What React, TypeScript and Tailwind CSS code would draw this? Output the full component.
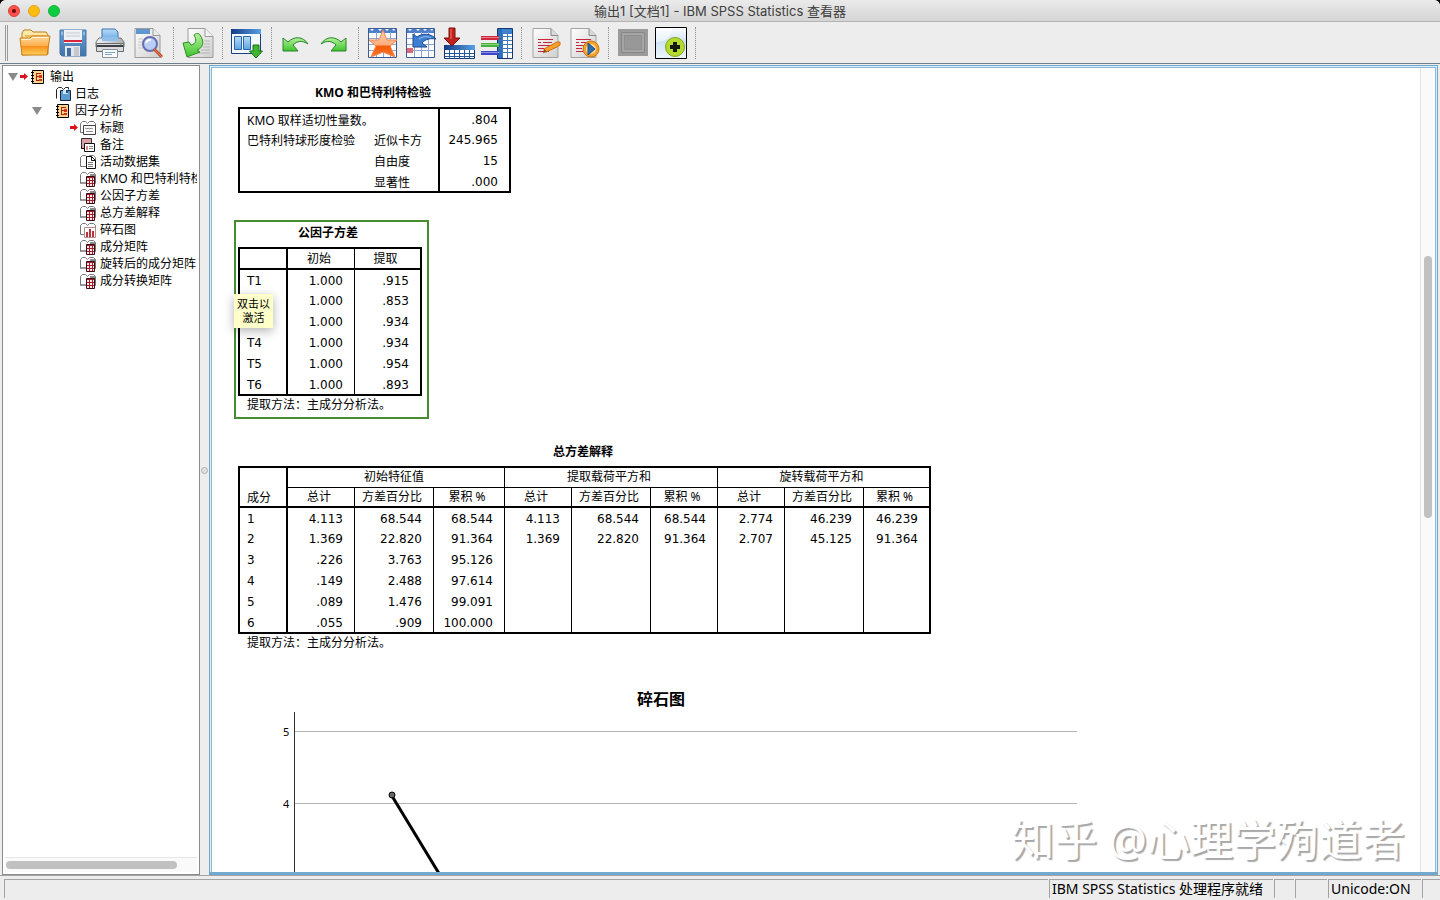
import type { ReactNode } from "react";

/* ---------- toolbar icons ---------- */

const Svg = ({ children }: { children: ReactNode }) => (
  <svg width="32" height="32" viewBox="0 0 32 32" fill="none" aria-hidden="true">
    {children}
  </svg>
);

const Gradients = () => (
  <svg width="0" height="0" className="absolute" aria-hidden="true">
    <defs>
      <linearGradient id="orange" x1="0" y1="0" x2="0" y2="1">
        <stop offset="0" stopColor="#fdd9a0" />
        <stop offset="0.5" stopColor="#fdb04e" />
        <stop offset="0.55" stopColor="#f9921c" />
        <stop offset="1" stopColor="#ffcf5c" />
      </linearGradient>
      <linearGradient id="folderBack" x1="0" y1="0" x2="0" y2="1">
        <stop offset="0" stopColor="#fff0b8" />
        <stop offset="1" stopColor="#f6b840" />
      </linearGradient>
      <linearGradient id="steel" x1="0" y1="0" x2="0" y2="1">
        <stop offset="0" stopColor="#6ea0d0" />
        <stop offset="1" stopColor="#3f74ab" />
      </linearGradient>
      <linearGradient id="silver" x1="0" y1="0" x2="1" y2="0">
        <stop offset="0" stopColor="#f4f4f4" />
        <stop offset="1" stopColor="#a9adb3" />
      </linearGradient>
      <linearGradient id="sheet" x1="0" y1="0" x2="1" y2="1">
        <stop offset="0" stopColor="#ffffff" />
        <stop offset="1" stopColor="#cfcfcf" />
      </linearGradient>
      <linearGradient id="sky" x1="0" y1="0" x2="0" y2="1">
        <stop offset="0" stopColor="#b9dcf7" />
        <stop offset="1" stopColor="#5ea3e0" />
      </linearGradient>
      <linearGradient id="green" x1="0" y1="0" x2="0" y2="1">
        <stop offset="0" stopColor="#b4f29a" />
        <stop offset="1" stopColor="#3fc42c" />
      </linearGradient>
      <linearGradient id="navy" x1="0" y1="0" x2="1" y2="0">
        <stop offset="0" stopColor="#123a86" />
        <stop offset="1" stopColor="#5aa0e4" />
      </linearGradient>
      <linearGradient id="star" x1="0" y1="0" x2="0" y2="1">
        <stop offset="0" stopColor="#ffd3b4" />
        <stop offset="0.55" stopColor="#fdac7c" />
        <stop offset="0.6" stopColor="#f45c08" />
        <stop offset="1" stopColor="#f9742a" />
      </linearGradient>
      <linearGradient id="panel" x1="0" y1="0" x2="0" y2="1">
        <stop offset="0" stopColor="#ffffff" />
        <stop offset="0.45" stopColor="#cfe3f3" />
        <stop offset="1" stopColor="#eef6fb" />
      </linearGradient>
    </defs>
  </svg>
);

const OpenIcon = () => (
  <Svg>
    <path d="M3 28V6l2-3h7l2 2h13l2 3v19z" fill="url(#folderBack)" stroke="#b97d18" />
    <path d="M6 9h20" stroke="#d8952b" />
    <path d="M1 11h10l2-2h18l-3 19H3z" fill="url(#orange)" stroke="#c8801a" />
    <path d="M2.500 12.500h9l2-2h16" stroke="#fff3d2" />
  </Svg>
);

const SaveIcon = () => (
  <Svg>
    <path d="M3 3h26v26H5l-2-2z" fill="url(#steel)" stroke="#4474a6" />
    <path d="M7 3h18v13H7z" fill="#eef2f6" />
    <path d="M9 6h14M9 9h14" stroke="#c5cbd2" />
    <path d="M7 13h18v2H7z" fill="#d9263e" />
    <path d="M8 19h15v10H8z" fill="#e3e6ea" />
    <path d="M10 21h4v8h-4z" fill="#3f6fa3" />
    <path d="M17 20h5v9h-5z" fill="#c4c9cf" />
    <path d="M5 5v3M27 5v3" stroke="#bcd4ec" />
  </Svg>
);

const PrintIcon = () => (
  <Svg>
    <path d="M7 2h13l3 3v9H7z" fill="url(#sky)" stroke="#3b75ad" />
    <path d="M4 11h22l3 4v5H1v-5z" fill="url(#silver)" stroke="#6f7277" />
    <path d="M7 10h16v4H7z" fill="#8dbfe9" />
    <path d="M1.500 16.500h27v8h-27z" fill="#d8dadd" stroke="#686b70" />
    <path d="M2 19h26" stroke="#3e4044" strokeWidth="2" />
    <path d="M7.500 22.500h15v8h-15z" fill="#f8fbfe" stroke="#8c9299" />
    <path d="M10 25.500h10M10 27.500h7" stroke="#7fa8cf" />
    <path d="M25 17h2" stroke="#3cae3c" />
  </Svg>
);

const PreviewIcon = () => (
  <Svg>
    <path d="M2 1.500h18l7 7v22H2z" fill="url(#sheet)" stroke="#9b9b9b" />
    <path d="M3 2h14v5H3z" fill="#6096cb" />
    <path d="M20 1.500v7h7" fill="#ececec" stroke="#9b9b9b" />
    <path d="M5 12h5M5 15h4M5 18h4M5 21h5" stroke="#c9c9c9" />
    <circle cx="17" cy="17" r="7" fill="#b9cdf5" stroke="#656fae" strokeWidth="2" />
    <path d="M13 16a4 4 0 0 1 5-3" stroke="#fff" strokeWidth="2" />
    <path d="M21 22l8 8" stroke="#b8442a" strokeWidth="3" />
    <path d="M21 22l8 8" stroke="#f08c5c" />
  </Svg>
);

const ExportIcon = () => (
  <Svg>
    <path d="M6 1.500h17l8 8v21H6z" fill="url(#sheet)" stroke="#9b9b9b" />
    <path d="M23 1.500v8h8" fill="#f2f2f2" stroke="#9b9b9b" />
    <path d="M22 14h6M22 17h6M21 20h7M19 23h9M13 26h15" stroke="#b5b5b5" />
    <path
      d="M1 16l6-1 2 3c5-1 6-5 3-10 2-2 5-2 6 0 5 7 3 13-3 15l3 2-13 5z"
      fill="url(#green)"
      stroke="#2d8f25"
    />
  </Svg>
);

const DialogIcon = () => (
  <Svg>
    <path d="M0.500 2.500h29v24h-29z" fill="#f3f8fd" stroke="#1c3f80" />
    <path d="M0 2h30v5H0z" fill="url(#navy)" />
    <path d="M3.500 9.500h7v13h-7zM12.500 9.500h7v13h-7z" fill="url(#sky)" stroke="#2a66ac" />
    <path d="M22 18h6v6h3.500L25 31l-6.500-7H22z" fill="#3fb62f" stroke="#17731a" />
  </Svg>
);

const UndoIcon = () => (
  <Svg>
    <path d="M3 11l5 4c6-6 15-6 20 2-6-4-11-3-15 1l5 6H3z" fill="url(#green)" stroke="#28842a" />
  </Svg>
);

const RedoIcon = () => (
  <Svg>
    <path d="M28 11l-5 4C17 9 8 9 3 17c6-4 11-3 15 1l-5 6h15z" fill="url(#green)" stroke="#28842a" />
  </Svg>
);

const Grid = () => (
  <>
    <path d="M1 2h28v28H1z" fill="#fcfdff" />
    <path d="M1 1h28v5H1z" fill="#4d7fcb" />
    <path d="M3 2l2 2 2-2zM11 2l2 2 2-2zM18 2l2 2 2-2zM25 2l2 2 1-2z" fill="#fff" />
    <path d="M1 11.500h28M1 17.500h28M1 23.500h28M9.500 5v25M16.500 5v25M23.500 5v25" stroke="#8ea6cf" />
    <path d="M1.500 1.500h28v29h-28z" stroke="#3d5c93" />
  </>
);

const StarIcon = () => (
  <Svg>
    <Grid />
    <path d="M16 3l4 10h10l-7 6 5 11-12-5-12 5 5-11-7-6h10z" fill="url(#star)" stroke="#f3844c" />
  </Svg>
);

const GotoIcon = () => (
  <Svg>
    <Grid />
    <path d="M2 21h6v5H2z" fill="#dc6678" />
    <path d="M8 7v13h14l-5-4c3-4 9-5 14-4-5-6-14-6-19-2z" fill="#3f7ed0" stroke="#1d4a91" />
    <path d="M14 12c4-3 9-3 12-1" stroke="#9cc3f2" />
  </Svg>
);

const InsertIcon = () => (
  <Svg>
    <path d="M1.500 18.500h30v13h-30z" fill="#fff" stroke="#16386e" />
    <path d="M1 18h31v5H1z" fill="url(#navy)" />
    <path d="M2 26.500h29M2 29.500h29M6.500 23v9M11.500 23v9M16.500 23v9M21.500 23v9M26.500 23v9" stroke="#24589c" />
    <path d="M6 1h6v10h5l-8 8-8-8h5z" fill="#c2221c" stroke="#7c0e0c" />
    <path d="M8 2v10" stroke="#ec7a6c" />
  </Svg>
);

const VariablesIcon = () => (
  <Svg>
    <path d="M16.500 1.500h15v30h-15z" fill="#fff" stroke="#16386e" />
    <path d="M17 2h14v5H17z" fill="#3d82cf" />
    <path d="M17 2h4v29h-4z" fill="#2a6fbd" />
    <path d="M21.500 6v25M26.500 6v25M18 9.500h13M18 13.500h13M18 17.500h13M18 21.500h13M18 25.500h13" stroke="#4378b8" />
    <path d="M0 9h18v4H0z" fill="#d2283c" />
    <path d="M0 16h18v4H0z" fill="#45b23a" />
    <path d="M0 24h18v4H0z" fill="#3c46c8" />
    <path d="M0 10.500h18M0 17.500h18M0 25.500h18" stroke="#fff" opacity="0.4" />
  </Svg>
);

const RedSheet = () => (
  <>
    <path d="M3 1.500h18l7 7v22H3z" fill="url(#sheet)" stroke="#a3a3a3" />
    <path d="M21 1.500v7h7" fill="#d9d9d9" stroke="#8a8a8a" />
    <path d="M8 12.500h15M8 15.500h3M13 15.500h9M8 18.500h14M8 21.500h6M8 24.500h11" stroke="#c8263f" />
  </>
);

const EditIcon = () => (
  <Svg>
    <RedSheet />
    <path d="M14 22l13-7 3 0 0 3-3 2-11 5z" fill="#f8a02c" stroke="#d06f10" />
    <path d="M14 22l-1 4 4-1z" fill="#8a4a12" />
  </Svg>
);

const RunIcon = () => (
  <Svg>
    <RedSheet />
    <circle cx="23" cy="22" r="8" fill="#f5a22d" stroke="#c87410" />
    <circle cx="23" cy="22" r="5" fill="#f9d9a0" />
    <path d="M20 16l7 6-7 6z" fill="#2c6cae" stroke="#1e4f88" />
  </Svg>
);

const DisabledIcon = () => (
  <Svg>
    <path d="M1 2h30v27H1z" fill="#9b9b9b" />
    <path d="M4.500 5.500h23v20h-23z" fill="#a5a5a5" stroke="#868686" />
    <path d="M7.500 8.500h17v14h-17z" fill="#989898" stroke="#8f8f8f" />
  </Svg>
);

const AddPanelIcon = () => (
  <Svg>
    <path d="M0 0h32v32H0z" fill="url(#panel)" />
    <path d="M1 15c8 0 14-3 17-14H1z" fill="#fff" opacity="0.5" />
    <path d="M0.500 0.500h31v31h-31z" stroke="#000" />
    <circle cx="20" cy="20" r="9.500" fill="#b5d92e" stroke="#83a51c" />
    <path d="M18 15h4v3h3v4h-3v3h-4v-3h-3v-4h3z" fill="#141a08" />
  </Svg>
);

const toolGroups: { label: string; icon: ReactNode }[][] = [
  [
    { label: "打开", icon: <OpenIcon /> },
    { label: "保存", icon: <SaveIcon /> },
    { label: "打印", icon: <PrintIcon /> },
    { label: "打印预览", icon: <PreviewIcon /> },
  ],
  [{ label: "导出", icon: <ExportIcon /> }],
  [{ label: "重新调用对话框", icon: <DialogIcon /> }],
  [
    { label: "撤销", icon: <UndoIcon /> },
    { label: "重做", icon: <RedoIcon /> },
  ],
  [
    { label: "转到数据", icon: <StarIcon /> },
    { label: "转到个案", icon: <GotoIcon /> },
    { label: "插入", icon: <InsertIcon /> },
    { label: "变量", icon: <VariablesIcon /> },
  ],
  [
    { label: "编辑语法", icon: <EditIcon /> },
    { label: "运行脚本", icon: <RunIcon /> },
  ],
  [
    { label: "选择最后输出", icon: <DisabledIcon /> },
    { label: "添加", icon: <AddPanelIcon /> },
  ],
];

const Toolbar = () => (
  <div className="flex h-[42px] shrink-0 items-center border-b border-[#6f7f8c] bg-[#ededed] pl-[5px]">
    <div className="mr-2 h-9 w-[3px] border-x border-[#9a9a9a]" />
    {toolGroups.map((group, i) => (
      <div key={i} className="flex items-center">
        {group.map((t) => (
          <button key={t.label} type="button" aria-label={t.label} className="flex h-9 w-[38px] items-center justify-center">
            {t.icon}
          </button>
        ))}
        <div className="mx-[5px] h-8 border-l border-dotted border-[#8c8c8c]" />
      </div>
    ))}
  </div>
);

/* ---------- outline tree ---------- */

const Tree16 = ({ children }: { children: ReactNode }) => (
  <svg width="16" height="16" viewBox="0 0 16 16" fill="none" className="shrink-0" aria-hidden="true">
    {children}
  </svg>
);

const NotebookIcon = () => (
  <Tree16>
    <path d="M2.500 1.500h11v13h-11z" fill="#fcd58c" stroke="#000" />
    <path d="M1 3.500h3M1 6.500h3M1 9.500h3M1 12.500h3" stroke="#000" />
    <path d="M6 4.500h5M6.500 4v7M6 7.500h3M6 11.500h3" stroke="#b02010" />
    <path d="M9 6h3v3H9zM9 10h3v2H9z" fill="#d6301c" />
  </Tree16>
);

const Book = () => (
  <path d="M0.500 12.500v-9l2-2h3l2 2 2-2h4l2 2v9h-7l-1 1-1-1z" fill="#fff" stroke="#777" />
);

const LogIcon = () => (
  <Tree16>
    <path d="M1.500 12.500v-9l2-2h3l2 2 2-2h3v2" fill="#fff" stroke="#222" />
    <path d="M5.500 4.500h10v10h-10z" fill="#5d9bd0" stroke="#10263e" />
    <path d="M8 4h5v4H8z" fill="#cfe4f6" />
    <path d="M11 4h2v3h-2z" fill="#1b4f86" />
  </Tree16>
);

const TitleIcon = () => (
  <Tree16>
    <Book />
    <path d="M3.500 5.500h12v9h-12z" fill="#fff" stroke="#444" />
    <path d="M5 8l2 1 1-1 2 1 1-1 2 1M6 11.500h7" stroke="#888" />
  </Tree16>
);

const NotesIcon = () => (
  <Tree16>
    <path d="M1.500 1.500h10v10h-10z" fill="#dba0a4" stroke="#333" />
    <path d="M1.500 9v2.500h5" stroke="#111" />
    <path d="M4.500 6.500h10v8h-10z" fill="#fff" stroke="#111" />
    <path d="M9 9.500h4M9 11.500h4" stroke="#888" />
    <path d="M7 9v4" stroke="#c81e1e" />
  </Tree16>
);

const DatasetIcon = () => (
  <Tree16>
    <Book />
    <path d="M6.500 2.500h5l4 4v8h-9z" fill="#fff" stroke="#111" />
    <path d="M11.500 2.500v4h4" stroke="#111" />
    <path d="M8 8.500h5M8 10.500h5M8 12.500h5" stroke="#777" />
  </Tree16>
);

const TableIcon = () => (
  <Tree16>
    <Book />
    <path d="M1 11h5v2H1z" fill="#999" />
    <path d="M10 3h5v3h-5z" fill="#8a8a8a" />
    <path d="M6.500 5.500h8v10h-8z" fill="#fbe9ea" />
    <path d="M6 6.500h9M6 9.500h9M6 12.500h9M9.500 6v9M12.500 6v9" stroke="#a31c2b" />
    <path d="M6.500 5.500h8v10h-8z" stroke="#3a0a10" />
  </Tree16>
);

const ChartIcon = () => (
  <Tree16>
    <Book />
    <path d="M4.500 5.500h11v10h-11z" fill="#fff" stroke="#b98a8a" />
    <path d="M6 10h2v5H6zM9 7h2v8H9zM12 9h2v6h-2z" fill="#b8323c" />
  </Tree16>
);

const Twisty = () => (
  <button type="button" aria-label="折叠" className="flex w-3 shrink-0 justify-center">
    <svg width="10" height="8" viewBox="0 0 10 8" aria-hidden="true">
      <path d="M0 0h10L5 8z" fill="#8a8a8a" />
    </svg>
  </button>
);

const RedArrow = () => (
  <svg width="8" height="7" viewBox="0 0 8 7" className="shrink-0" aria-hidden="true">
    <path d="M0 2h4V0l4 3.500L4 7V5H0z" fill="#d8141f" />
  </svg>
);

const leaves: { label: string; icon: ReactNode; current?: boolean }[] = [
  { label: "标题", icon: <TitleIcon />, current: true },
  { label: "备注", icon: <NotesIcon /> },
  { label: "活动数据集", icon: <DatasetIcon /> },
  { label: "KMO 和巴特利特检验", icon: <TableIcon /> },
  { label: "公因子方差", icon: <TableIcon /> },
  { label: "总方差解释", icon: <TableIcon /> },
  { label: "碎石图", icon: <ChartIcon /> },
  { label: "成分矩阵", icon: <TableIcon /> },
  { label: "旋转后的成分矩阵", icon: <TableIcon /> },
  { label: "成分转换矩阵", icon: <TableIcon /> },
];

const Outline = () => (
  <aside className="ml-0.5 flex w-[198px] shrink-0 flex-col border border-[#8c8c8c] bg-white">
    <ul className="min-h-0 flex-1 overflow-hidden whitespace-nowrap pl-1 pr-0.5 pt-0.5 text-[12px] leading-[17px]">
      <li className="flex h-[17px] items-center">
        <Twisty />
        <span className="ml-px flex w-2"><RedArrow /></span>
        <span className="ml-0.5"><NotebookIcon /></span>
        <span className="ml-1">输出</span>
      </li>
      <li className="flex h-[17px] items-center pl-12">
        <LogIcon />
        <span className="ml-1">日志</span>
      </li>
      <li className="flex h-[17px] items-center pl-6">
        <Twisty />
        <span className="ml-3"><NotebookIcon /></span>
        <span className="ml-1">因子分析</span>
      </li>
      {leaves.map((leaf) => (
        <li key={leaf.label} className="flex h-[17px] items-center overflow-hidden pl-[63px]">
          <span className="flex w-[10px] shrink-0">{leaf.current && <RedArrow />}</span>
          {leaf.icon}
          <span className="ml-1">{leaf.label}</span>
        </li>
      ))}
    </ul>
    <div className="mx-0.5 mb-0.5 h-[15px] shrink-0 border-t border-[#e6e6e6] bg-[#fafafa] px-px pt-[3px]">
      <div className="h-2 w-[171px] rounded-full bg-[#c1c1c1]" />
    </div>
  </aside>
);

/* ---------- pivot tables ---------- */

const rowHeight = (i: number, last: number) => (i === 0 || i === last ? "h-5" : "h-[21px]");
const labelCell = "whitespace-nowrap pl-[7px] pt-[3px] text-left align-top font-normal leading-[17px]";
const numberCell = "pr-[11px] pt-[3px] text-right align-top font-['DejaVu_Sans'] leading-[17px]";

const kmoRows = [
  ["KMO 取样适切性量数。", "", ".804"],
  ["巴特利特球形度检验", "近似卡方", "245.965"],
  ["", "自由度", "15"],
  ["", "显著性", ".000"],
];

const KmoTable = () => (
  <table className="w-[273px] table-fixed border-separate border-spacing-0 border-2 border-black">
    <colgroup>
      <col className="w-[127px]" />
      <col className="w-[73px]" />
      <col />
    </colgroup>
    <tbody>
      {kmoRows.map((r, i) => (
        <tr key={i} className={rowHeight(i, 3)}>
          {i === 0 ? (
            <th colSpan={2} className={`border-r-2 border-black ${labelCell}`}>{r[0]}</th>
          ) : (
            <>
              <th className={labelCell}>{r[0]}</th>
              <th className={`border-r-2 border-black ${labelCell}`}>{r[1]}</th>
            </>
          )}
          <td className={numberCell}>{r[2]}</td>
        </tr>
      ))}
    </tbody>
  </table>
);

const communalities = [
  ["T1", "1.000", ".915"],
  ["", "1.000", ".853"],
  ["", "1.000", ".934"],
  ["T4", "1.000", ".934"],
  ["T5", "1.000", ".954"],
  ["T6", "1.000", ".893"],
];

const CommunalitiesTable = () => (
  <table className="w-[184px] table-fixed border-separate border-spacing-0 border-2 border-black">
    <colgroup>
      <col className="w-12" />
      <col className="w-[67px]" />
      <col />
    </colgroup>
    <thead>
      <tr className="h-[21px]">
        <th className="border-b-2 border-r-2 border-black" />
        <th className="border-b-2 border-r border-black pr-1 font-normal">初始</th>
        <th className="border-b-2 border-black pr-1 font-normal">提取</th>
      </tr>
    </thead>
    <tbody>
      {communalities.map((r, i) => (
        <tr key={i} className={rowHeight(i, 5)}>
          <th className={`border-r-2 border-black font-['DejaVu_Sans'] ${labelCell}`}>{r[0]}</th>
          <td className={`border-r border-black ${numberCell}`}>{r[1]}</td>
          <td className={numberCell}>{r[2]}</td>
        </tr>
      ))}
    </tbody>
  </table>
);

const variance = [
  ["4.113", "68.544", "68.544", "4.113", "68.544", "68.544", "2.774", "46.239", "46.239"],
  ["1.369", "22.820", "91.364", "1.369", "22.820", "91.364", "2.707", "45.125", "91.364"],
  [".226", "3.763", "95.126", "", "", "", "", "", ""],
  [".149", "2.488", "97.614", "", "", "", "", "", ""],
  [".089", "1.476", "99.091", "", "", "", "", "", ""],
  [".055", ".909", "100.000", "", "", "", "", "", ""],
];
const groups = ["初始特征值", "提取载荷平方和", "旋转载荷平方和"];
const measures = ["总计", "方差百分比", "累积 %"];

const VarianceTable = () => (
  <table className="w-[693px] table-fixed border-separate border-spacing-0 border-2 border-black">
    <colgroup>
      <col className="w-12" />
      <col className="w-[67px]" />
      <col className="w-[79px]" />
      <col className="w-[71px]" />
      <col className="w-[67px]" />
      <col className="w-[79px]" />
      <col className="w-[67px]" />
      <col className="w-[67px]" />
      <col className="w-[79px]" />
      <col />
    </colgroup>
    <thead className="leading-[17px]">
      <tr className="h-5">
        <th rowSpan={2} className="border-b-2 border-r-2 border-black pl-[7px] text-left align-bottom font-normal">成分</th>
        {groups.map((g, i) => (
          <th key={g} colSpan={3} className={`border-b border-black pr-1 align-top font-normal ${i < 2 ? "border-r" : ""}`}>{g}</th>
        ))}
      </tr>
      <tr className="h-5">
        {groups.map((g, i) =>
          measures.map((m, j) => (
            <th key={g + m} className={`border-b-2 border-black pr-1 align-top font-normal ${i * 3 + j < 8 ? "border-r" : ""}`}>{m}</th>
          )),
        )}
      </tr>
    </thead>
    <tbody>
      {variance.map((r, i) => (
        <tr key={i} className={rowHeight(i, 5)}>
          <th className={`border-r-2 border-black font-['DejaVu_Sans'] ${labelCell}`}>{i + 1}</th>
          {r.map((v, j) => (
            <td key={j} className={`border-black ${j < 8 ? "border-r" : ""} ${numberCell}`}>{v}</td>
          ))}
        </tr>
      ))}
    </tbody>
  </table>
);

/* ---------- scree plot ---------- */

const ScreePlot = () => (
  <figure className="mt-9 w-[846px]">
    <figcaption className="text-center text-[16px] font-bold leading-6">碎石图</figcaption>
    <svg width="846" height="240" viewBox="0 0 846 240" fill="none" className="block" role="img" aria-label="碎石图">
      <path d="M56 20.500h783M56 92.500h783" stroke="#b4b4b4" />
      <path d="M56.500 1v239" stroke="#333" />
      <path d="M154 85L242 230" stroke="#000" strokeWidth="3" />
      <circle cx="154" cy="84" r="3" fill="#666" stroke="#000" />
      <text x="45" y="25" fontSize="11" fill="#000">5</text>
      <text x="45" y="97" fontSize="11" fill="#000">4</text>
    </svg>
  </figure>
);

const Viewer = () => (
  <main className="flex min-w-0 flex-1 border border-b-[3px] border-[#72a8cd] bg-[#d8edfa] pl-px pr-px pt-px">
    <div className="relative flex min-w-0 flex-1 border-x border-t border-[#8dbbd9] bg-white">
      <div className="min-w-0 flex-1 overflow-hidden pl-[26px] pt-4 text-[12px] leading-[18px] text-black">
        <section>
          <h2 className="mb-[5px] w-[270px] text-center font-bold">KMO 和巴特利特检验</h2>
          <KmoTable />
        </section>

        <section className="relative -ml-1 mt-[27px] w-[195px] border-2 border-[#478c30] px-0.5 pb-[3px] pt-0.5">
          <h2 className="mb-[5px] w-[180px] text-center font-bold">公因子方差</h2>
          <CommunalitiesTable />
          <p className="pl-[9px]">提取方法：主成分分析法。</p>
          <div
            role="tooltip"
            className="absolute -left-0.5 top-[72px] w-[39px] bg-[#feffc9] py-[3px] text-center text-[11px] leading-[14px] shadow-[0_3px_10px_rgba(0,0,0,0.3)]"
          >
            双击以
            <br />
            激活
          </div>
        </section>

        <section className="mt-6">
          <h2 className="mb-[5px] w-[690px] text-center font-bold">总方差解释</h2>
          <VarianceTable />
          <p className="pl-[9px] leading-[17px]">提取方法：主成分分析法。</p>
        </section>

        <ScreePlot />
      </div>
      <div className="w-[15px] shrink-0 border-l border-[#e4e4e4] bg-[#fafafa] pl-[3px] pt-[188px]">
        <div className="h-[262px] w-2 rounded-full bg-[#c1c1c1]" />
      </div>
      <div className="pointer-events-none absolute bottom-1 right-[30px] whitespace-nowrap text-[43px] leading-[56px] text-white [text-shadow:2px_2px_1px_#a8a8a8]">
        知乎 @心理学殉道者
      </div>
    </div>
  </main>
);

const field = "flex h-[19px] items-center whitespace-nowrap border-l border-t border-[#a3a3a3] pl-0.5";

export default function App() {
  return (
    <div className="h-screen overflow-hidden bg-black font-['Noto_Sans','Noto_Sans_CJK_SC',sans-serif] text-black">
      <Gradients />
      <div className="flex h-full flex-col overflow-hidden rounded-t-md bg-[#ededed]">
        <header className="relative flex h-[22px] shrink-0 items-center justify-center border-b border-[#b4b4b4] bg-gradient-to-b from-[#ebebeb] to-[#d4d4d4]">
          <div className="absolute left-2 flex gap-2">
            <button type="button" aria-label="关闭" className="flex size-3 items-center justify-center rounded-full border border-[#dd4038] bg-[#f9514c]">
              <span className="size-1 rounded-full bg-[#6d0a05]" />
            </button>
            <button type="button" aria-label="最小化" className="size-3 rounded-full border border-[#e2a41c] bg-[#fdbb10]" />
            <button type="button" aria-label="缩放" className="size-3 rounded-full border border-[#12b533] bg-[#0ccc43]" />
          </div>
          <h1 className="font-['Inter','Noto_Sans_CJK_SC',sans-serif] text-[13px] leading-5 text-[#404040]">
            输出1 [文档1] - IBM SPSS Statistics 查看器
          </h1>
        </header>
        <Toolbar />
        <div className="mt-px flex min-h-0 flex-1 pr-0.5">
          <Outline />
          <div className="flex w-[9px] shrink-0 items-center justify-center">
            <div className="size-[7px] rounded-full border border-[#b0b0b0] bg-[#e0e0e0]" />
          </div>
          <Viewer />
        </div>
        <footer className="flex h-[25px] shrink-0 items-center gap-px border-t border-[#a3a3a3] bg-[#ededed] pl-1 text-[14px]">
          <div className={`${field} flex-1`} />
          <div className={`${field} w-[224px]`}>IBM SPSS Statistics 处理程序就绪</div>
          <div className={`${field} w-5`} />
          <div className={`${field} w-8`} />
          <div className={`${field} w-[93px]`}>Unicode:ON</div>
          <div className={`${field} w-[18px]`} />
        </footer>
      </div>
    </div>
  );
}
